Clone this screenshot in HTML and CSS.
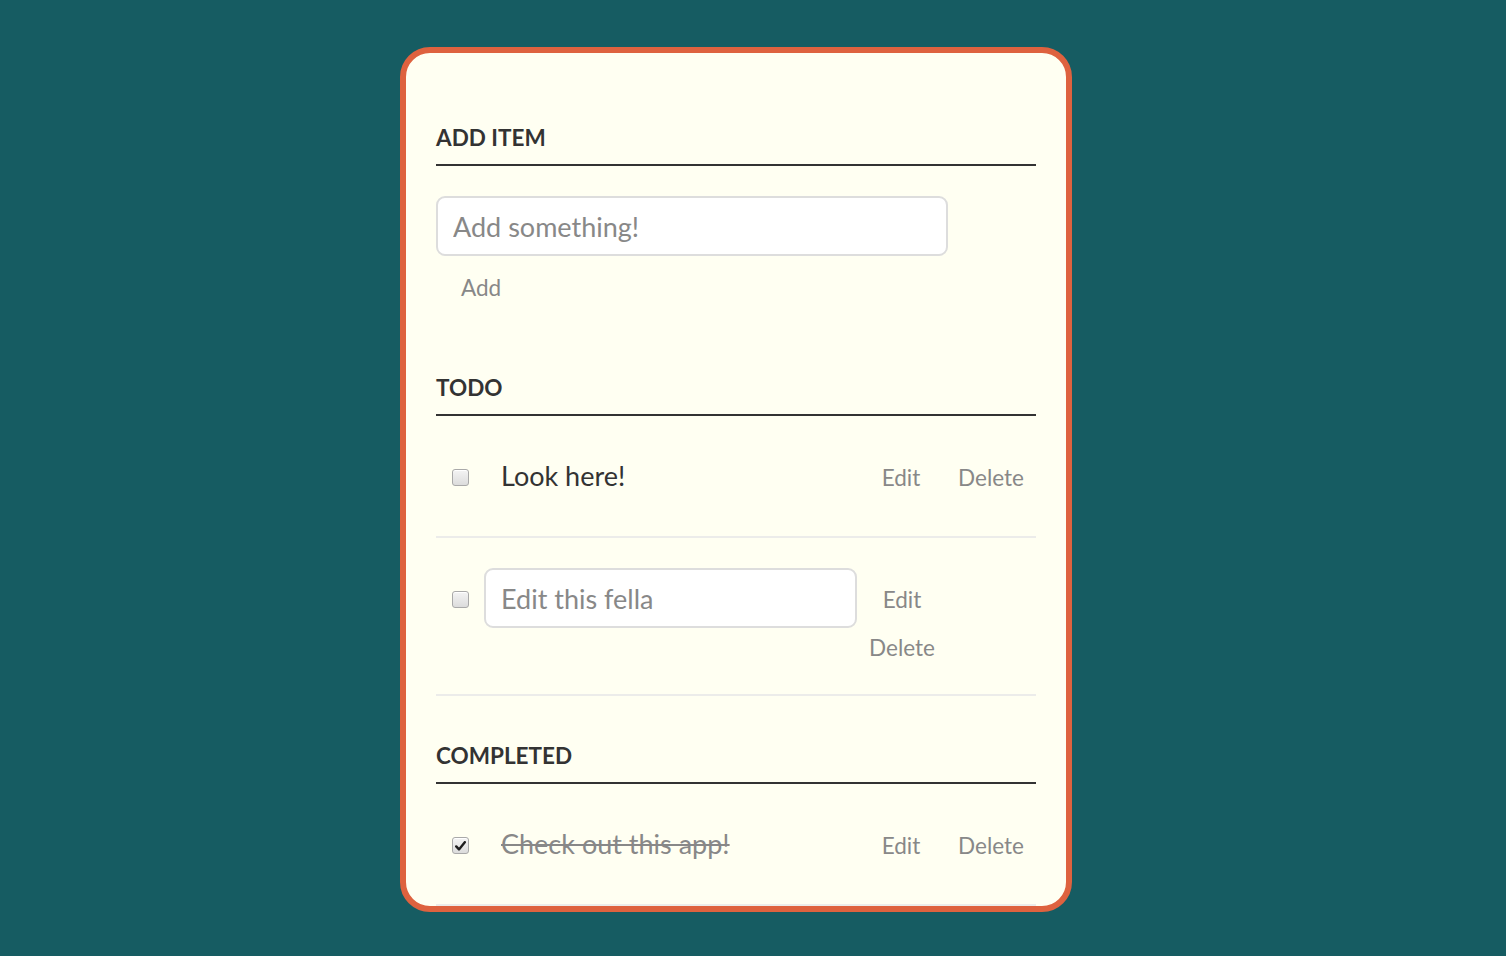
FILE: index.html
```html
<!DOCTYPE html>
<html lang="en">
<head>
<meta charset="utf-8">
<title>Todo</title>
<link rel="stylesheet" href="styles.css">
</head>
<body>
<div class="card">
  <div class="add-section">
    <h3 class="section-title">Add Item</h3>
    <input class="new-task" type="text" placeholder="Add something!">
    <div class="add-row"><button class="btn">Add</button></div>
  </div>

  <h3 class="section-title">Todo</h3>
  <ul class="list">
    <li class="item">
      <span class="check"></span>
      <span class="item-label">Look here!</span>
      <div class="actions">
        <button class="btn">Edit</button>
        <button class="btn">Delete</button>
      </div>
    </li>
    <li class="item">
      <span class="check"></span>
      <input class="edit-input" type="text" value="Edit this fella">
      <div class="actions actions-stacked">
        <button class="btn">Edit</button>
        <button class="btn">Delete</button>
      </div>
    </li>
  </ul>

  <h3 class="section-title">Completed</h3>
  <ul class="list list-last">
    <li class="item">
      <span class="check check-on"><svg width="11" height="10" viewBox="0 0 11 10"><path d="M1.2 5.4 L4 8.4 L9.8 1.2" fill="none" stroke="#1e1e1e" stroke-width="2.4" stroke-linecap="round" stroke-linejoin="round"/></svg></span>
      <span class="item-label item-done">Check out this app!</span>
      <div class="actions">
        <button class="btn">Edit</button>
        <button class="btn">Delete</button>
      </div>
    </li>
  </ul>
</div>
</body>
</html>
```

FILE: styles.css
```css
html {
  background: #165c62;
}
body {
  margin: 0;
  background: #165c62;
  font-family: Lato, "Open Sans", sans-serif;
  min-height: 956px;
}
.card {
  width: 600px;
  margin: 47px 0 0 400px;
  padding: 26px 30px 0;
  background: #fffff2;
  border: 6px solid #de623f;
  border-radius: 30px;
}
.section-title {
  margin: 0;
  padding: 45px 0 13px;
  font-size: 22.5px;
  line-height: 27px;
  font-weight: 700;
  color: #333;
  text-transform: uppercase;
  border-bottom: 2px solid #333;
}
.add-section {
  margin-bottom: 25px;
}
.new-task {
  display: block;
  box-sizing: border-box;
  margin: 30px 0 0;
  width: 512px;
  height: 60px;
  padding: 0 15px;
  border: 2px solid #dddddd;
  border-radius: 9px;
  background: #fff;
  font-family: Lato, sans-serif;
  font-size: 27px;
  color: #888;
  outline: none;
}
.new-task::placeholder {
  color: #888;
  opacity: 1;
}
.add-row {
  display: flex;
}
.btn {
  width: 90px;
  height: 33px;
  margin: 15px 0 0;
  padding: 0;
  border: 0;
  background: none;
  font-family: Lato, sans-serif;
  font-size: 22.5px;
  line-height: 27px;
  color: #888;
  text-align: center;
  cursor: pointer;
}
.list {
  list-style: none;
  margin: 0 0 1px;
  padding: 0;
}
.list-last {
  margin: 0;
}
.item {
  display: flex;
  align-items: flex-start;
  padding: 30px 0;
  border-bottom: 2px solid #ececea;
}
.check {
  box-sizing: border-box;
  flex: none;
  width: 17px;
  height: 17px;
  margin: 23px 15px 0 16px;
  border: 1px solid #a9a9a9;
  border-radius: 3px;
  background: linear-gradient(#f4f4f4, #dcdcdc);
  box-shadow: inset 0 1px 0 #fff;
  display: flex;
  align-items: center;
  justify-content: center;
}
.check-on svg {
  display: block;
}
.item-label {
  box-sizing: border-box;
  flex: none;
  width: 372px;
  padding-left: 17px;
  font-size: 27px;
  line-height: 60px;
  color: #333;
}
.item-done {
  color: #888;
  text-decoration: line-through;
  text-decoration-thickness: 2px;
}
.edit-input {
  box-sizing: border-box;
  flex: none;
  width: 373px;
  height: 60px;
  margin: 0;
  padding: 0 15px;
  border: 2px solid #dddddd;
  border-radius: 9px;
  background: #fff;
  font-family: Lato, sans-serif;
  font-size: 27px;
  color: #888;
  outline: none;
}
.actions {
  display: flex;
}
.actions-stacked {
  flex-direction: column;
}
```
